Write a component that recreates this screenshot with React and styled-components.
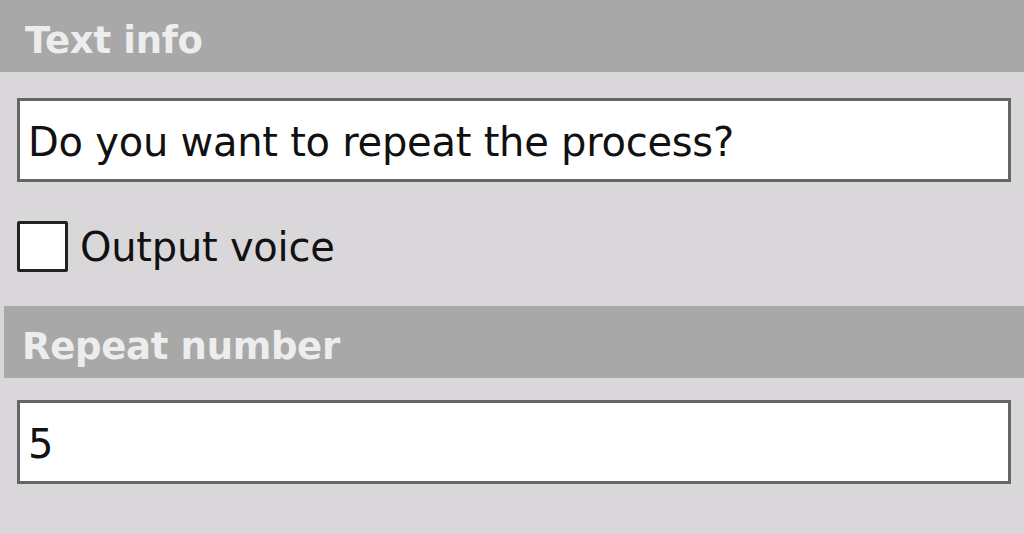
import React from 'react';
import styled, { createGlobalStyle } from 'styled-components';

const GlobalStyle = createGlobalStyle`
  html, body {
    margin: 0;
    padding: 0;
    background: #d9d7da;
  }
  body {
    font-family: "DejaVu Sans", Verdana, sans-serif;
  }
`;

const Panel = styled.div`
  width: 1024px;
  height: 534px;
  background: #d9d7da;
  display: flex;
  flex-direction: column;
  overflow: hidden;
`;

const SectionHeader = styled.div`
  height: 72px;
  box-sizing: border-box;
  margin-left: ${(p) => p.$inset || 0}px;
  padding: 10px 0 0 ${(p) => p.$textLeft || 24}px;
  background: #a8a8a8;
  color: #ededed;
  font-weight: bold;
  font-size: 37px;
  line-height: 62px;
  letter-spacing: -0.3px;
`;

const Field = styled.div`
  margin: ${(p) => p.$top}px 13px 0 17px;
  height: 84px;
  box-sizing: border-box;
  background: #fff;
  border: 3px solid #666;
  display: flex;
  align-items: center;
  padding: 3px 0 0 8px;
  font-size: 40px;
  letter-spacing: -0.25px;
  color: #111;
  white-space: nowrap;
`;

const CheckRow = styled.label`
  margin: 39px 0 34px 17px;
  display: flex;
  align-items: center;
  gap: 12px;
  font-size: 40px;
  letter-spacing: -0.25px;
  color: #111;
`;

const Box = styled.span`
  width: 51px;
  height: 51px;
  box-sizing: border-box;
  background: #fff;
  border: 3px solid #222;
  border-radius: 2px;
`;

export default function App() {
  return (
    <Panel>
      <GlobalStyle />
      <SectionHeader $textLeft={25}>Text info</SectionHeader>
      <Field $top={26}>Do you want to repeat the process?</Field>
      <CheckRow>
        <Box />
        Output voice
      </CheckRow>
      <SectionHeader $inset={4} $textLeft={18}>Repeat number</SectionHeader>
      <Field $top={22}>5</Field>
    </Panel>
  );
}
